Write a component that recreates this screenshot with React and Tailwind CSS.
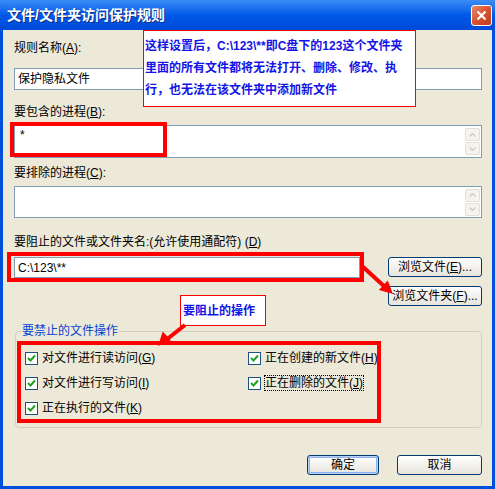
import React from 'react';

const Acc = ({ k }) => (
    <span>(<span className="underline">{k}</span>)</span>
);

const CheckBox = ({ label, k, focused }) => (
    <div className="h-[16px] flex items-center gap-[4px]">
        <div className="w-[13px] h-[13px] border border-[#1C5180] bg-white flex items-center justify-center">
            <svg width="9" height="9" viewBox="0 0 9 9">
                <path d="M1 4 L3.5 6.5 L8 1.5" stroke="#21A121" strokeWidth="2" fill="none" />
            </svg>
        </div>
        <span className={focused ? 'outline-1 outline-dotted outline-black leading-[14px]' : 'leading-[14px]'}>
            {label}<Acc k={k} />
        </span>
    </div>
);

const XpButton = ({ children, className, isDefault }) => (
    <div className={`h-[20px] rounded-[3px] border border-[#003C74] bg-gradient-to-b from-white to-[#E6E4DC] flex items-center justify-center ${isDefault ? 'shadow-[inset_0_0_0_1px_#B9D1F8,inset_0_0_0_2px_#8CB3F0]' : ''} ${className}`}>
        {children}
    </div>
);

const ScrollBox = ({ h }) => (
    <div className={`${h} border border-[#7F9DB9] bg-white flex justify-end items-center pr-[1px]`}>
        <div className="flex flex-col gap-[1px]">
            <div className="w-[15px] h-[13px] border border-[#E2DFD3] bg-[#F4F3EE] rounded-[2px] flex items-center justify-center">
                <svg width="7" height="4" viewBox="0 0 7 4"><path d="M0.5 3.5 L3.5 0.5 L6.5 3.5" stroke="#C9C7BA" strokeWidth="1.2" fill="none" /></svg>
            </div>
            <div className="w-[15px] h-[13px] border border-[#E2DFD3] bg-[#F4F3EE] rounded-[2px] flex items-center justify-center">
                <svg width="7" height="4" viewBox="0 0 7 4"><path d="M0.5 0.5 L3.5 3.5 L6.5 0.5" stroke="#C9C7BA" strokeWidth="1.2" fill="none" /></svg>
            </div>
        </div>
    </div>
);

export default function App() {
    return (
        <div className="w-[495px] h-[489px] relative flex flex-col bg-[#0050DC] overflow-hidden text-[12px] text-black font-['Liberation_Sans','Noto_Sans_CJK_SC',sans-serif]">
            {/* Title bar */}
            <div className="h-[30px] shrink-0 flex items-center justify-between pl-[7px] pr-[3px] bg-gradient-to-b from-[#3C8CF6] via-[#0058E8] to-[#004AD8]">
                <span className="text-white font-bold text-[14px] leading-[16px] [text-shadow:1px_1px_0_#0A2F8C]">文件/文件夹访问保护规则</span>
                <div className="w-[21px] h-[21px] rounded-[3px] border border-white bg-gradient-to-br from-[#E8876A] via-[#D9532F] to-[#BF3A18] flex items-center justify-center">
                    <svg width="11" height="11" viewBox="0 0 11 11">
                        <path d="M1.5 1.5 L9.5 9.5 M9.5 1.5 L1.5 9.5" stroke="white" strokeWidth="2.2" />
                    </svg>
                </div>
            </div>

            {/* Body */}
            <div className="flex-1 mx-[3px] mb-[3px] bg-[#ECE9D8] flex flex-col pl-[11px] pr-[10px]">
                <div className="mt-[10px] h-[16px] leading-[16px]">规则名称<Acc k="A" />:</div>
                <div className="mt-[12px] h-[22px] border border-[#7F9DB9] bg-white flex items-center pl-[3px]">保护隐私文件</div>

                <div className="mt-[14px] h-[16px] leading-[16px]">要包含的进程<Acc k="B" />:</div>
                <div className="mt-[5px] relative">
                    <ScrollBox h="h-[33px]" />
                    <span className="absolute left-[6px] top-[2px] leading-[16px]">*</span>
                </div>

                <div className="mt-[7px] h-[16px] leading-[16px]">要排除的进程<Acc k="C" />:</div>
                <div className="mt-[5px]">
                    <ScrollBox h="h-[32px]" />
                </div>

                <div className="mt-[16px] h-[16px] leading-[16px]">要阻止的文件或文件夹名:(允许使用通配符) <Acc k="D" /></div>
                <div className="mt-[7px] flex items-start">
                    <div className="w-[346px] h-[21px] border border-[#7F9DB9] bg-white flex items-center pl-[3px]">C:\123\**</div>
                    <XpButton className="ml-auto w-[94px]">浏览文件<Acc k="E" />...</XpButton>
                </div>
                <div className="mt-[8px] flex justify-end">
                    <XpButton className="w-[94px]">浏览文件夹<Acc k="F" />...</XpButton>
                </div>

                <fieldset className="mt-[17px] ml-[1px] h-[105px] border border-[#D0D0BF] rounded-[4px]">
                    <legend className="ml-[5px] px-[1px] text-[#0046D5] leading-[16px]">要禁止的文件操作</legend>
                    <div className="mt-[11px] pl-[9px] flex">
                        <div className="w-[223px] flex flex-col gap-[9px]">
                            <CheckBox label="对文件进行读访问" k="G" />
                            <CheckBox label="对文件进行写访问" k="I" />
                            <CheckBox label="正在执行的文件" k="K" />
                        </div>
                        <div className="flex flex-col gap-[9px]">
                            <CheckBox label="正在创建的新文件" k="H" />
                            <CheckBox label="正在删除的文件" k="J" focused />
                        </div>
                    </div>
                </fieldset>

                <div className="mt-[27px] flex justify-end gap-[18px]">
                    <XpButton className="w-[72px]" isDefault>确定</XpButton>
                    <XpButton className="w-[85px]">取消</XpButton>
                </div>
            </div>

            {/* Annotation overlays */}
            <div className="absolute left-[143px] top-[30px] w-[273px] h-[77px] border border-[#FF0000] bg-white pl-[1px] pt-[4px] text-[#1414E6] font-bold leading-[22px] whitespace-nowrap">
                这样设置后，C:\123\**即C盘下的123这个文件夹<br />
                里面的所有文件都将无法打开、删除、修改、执<br />
                行，也无法在该文件夹中添加新文件
            </div>
            <div className="absolute left-[10px] top-[122px] w-[157px] h-[35px] border-4 border-[#FF0000]" />
            <div className="absolute left-[7px] top-[252px] w-[357px] h-[30px] border-4 border-[#FF0000]" />
            <div className="absolute left-[180px] top-[295px] w-[86px] h-[31px] border border-[#FF0000] bg-white flex items-center pl-[2px] text-[#1414E6] font-bold">要阻止的操作</div>
            <div className="absolute left-[17px] top-[341px] w-[364px] h-[82px] border-4 border-[#FF0000]" />

            <svg className="absolute left-0 top-0 pointer-events-none" width="495" height="489">
                <line x1="362" y1="266" x2="385" y2="287" stroke="#FF0000" strokeWidth="4" />
                <polygon points="393,294 378.9,290.1 387.7,280.5" fill="#FF0000" />
                <line x1="185" y1="325" x2="166" y2="340" stroke="#FF0000" strokeWidth="4" />
                <polygon points="158,346 162.7,331.5 170.9,340.3" fill="#FF0000" />
            </svg>
        </div>
    );
}
